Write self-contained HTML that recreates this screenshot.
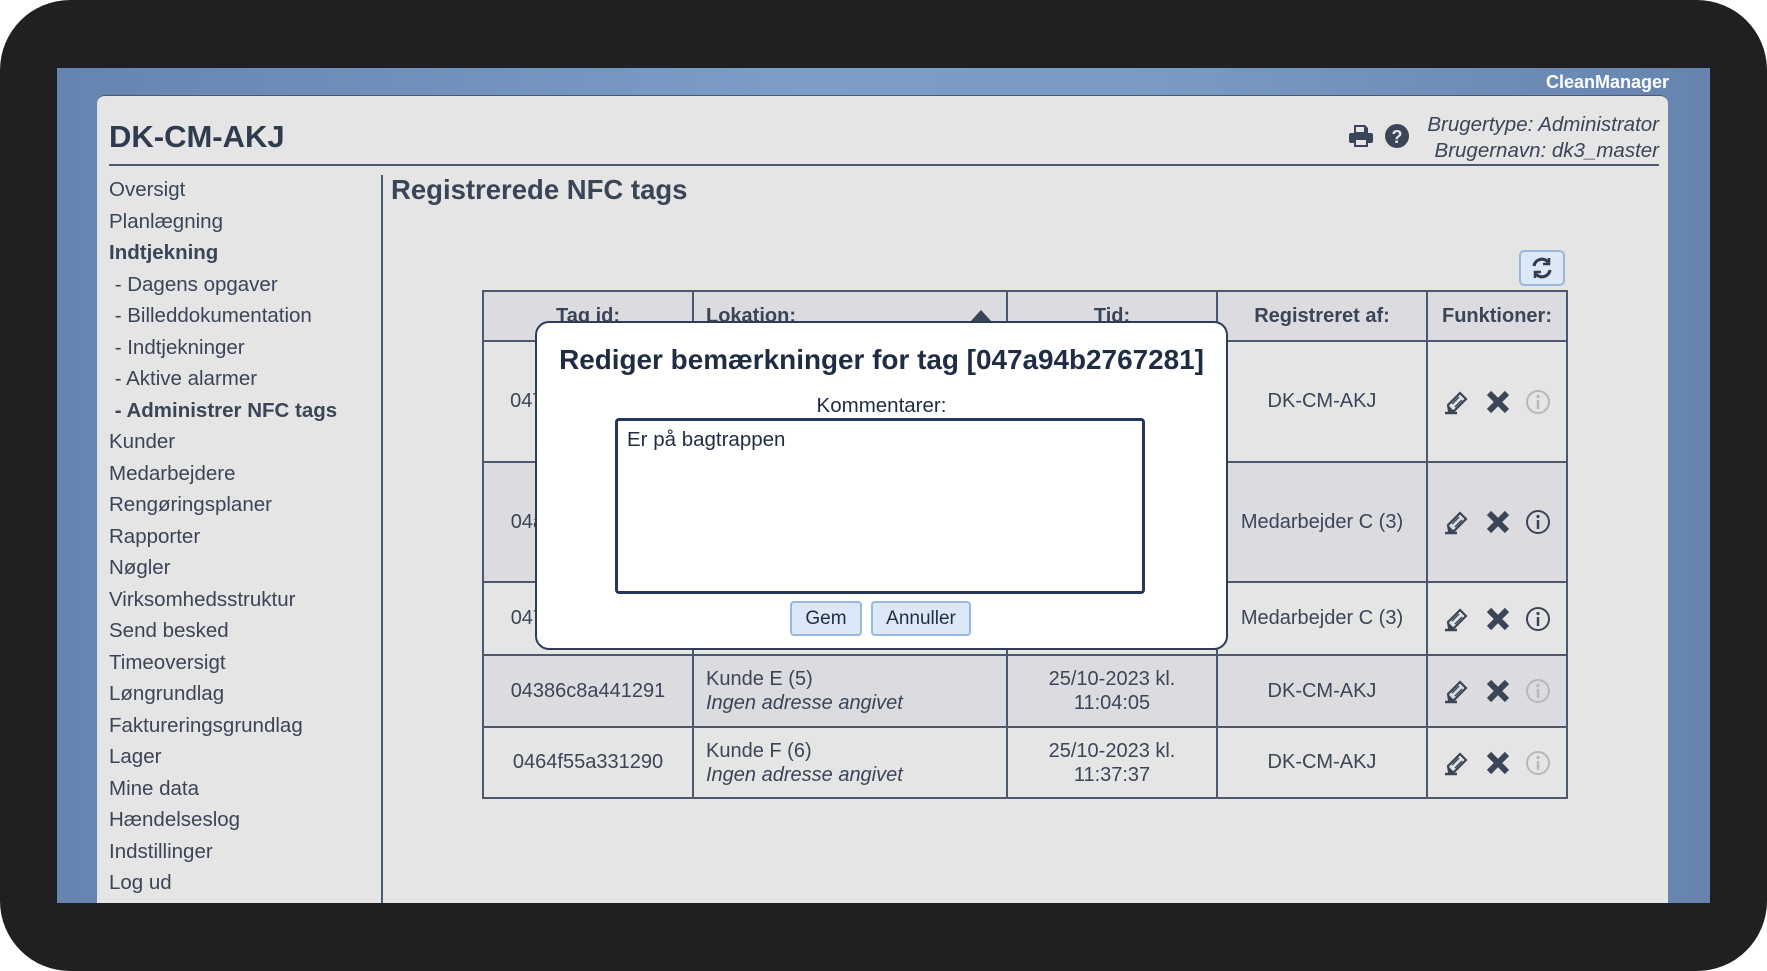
<!DOCTYPE html>
<html><head><meta charset="utf-8"><style>
*{margin:0;padding:0;box-sizing:border-box}
body{width:1767px;height:971px;background:#fff;position:relative;overflow:hidden;font-family:"Liberation Sans",sans-serif;color:#3a4558}
.frame{position:absolute;left:0;top:0;width:1767px;height:971px;background:#201f21;border-radius:70px}
.blue{position:absolute;left:57px;top:68px;width:1653px;height:835px;background:linear-gradient(90deg,#6684b0 0%,#7b9dc6 45%,#7a9bc3 65%,#6684ae 100%)}
.cm{position:absolute;right:98px;top:72px;color:#fff;font-weight:bold;font-size:18px}
.panel{position:absolute;left:97px;top:95px;width:1571px;height:808px;background:#e5e5e5;border-radius:8px 8px 0 0;border-top:1px solid #4a5870}
.a{position:absolute;white-space:nowrap}
.menu div{position:absolute;left:109px;font-size:20.5px;color:#3a4558}
table{position:absolute;left:482px;top:290px;border-collapse:collapse;font-size:20px;color:#3a4558}
td,th{border:2px solid #4a5870;text-align:center;padding:0}
th{background:#dcdce0;height:50px;font-weight:bold}
tr.d td{background:#dcdce0}
tr.l td{background:#e5e5e5}
td.loc{text-align:left;padding-left:12px;line-height:24px}
.ic{display:flex;justify-content:center;align-items:center;gap:14px}
.modal{position:absolute;left:535px;top:321px;width:693px;height:329px;background:#fff;border:2px solid #2d3d55;border-radius:14px}
.btn{position:absolute;top:601px;height:35px;background:#dce8f5;border:2px solid #9ab7dd;border-radius:4px;font-size:19px;color:#1f2d44;text-align:center;line-height:31px}
</style></head><body>
<div class="frame"></div>
<div class="blue"></div>
<div class="cm">CleanManager</div>
<div class="panel"></div>
<div class="a" style="left:109px;top:119px;font-size:31px;font-weight:bold;color:#2f3b4e">DK-CM-AKJ</div>
<div class="a" style="right:108px;top:112px;font-size:20.5px;font-style:italic;text-align:right;line-height:26px;color:#3a4558">Brugertype: Administrator<br>Brugernavn: dk3_master</div>
<svg class="a" style="left:1348px;top:124px" width="26" height="24" viewBox="0 0 26 24"><path d="M6 1h11l3 3v5H6z" fill="#3a4558"/><path d="M8 3h8v5H8z" fill="#e5e5e5"/><rect x="1" y="9" width="24" height="10" rx="2" fill="#3a4558"/><rect x="6" y="15" width="14" height="8" fill="#3a4558"/><rect x="8" y="16" width="10" height="5" fill="#e5e5e5"/></svg>
<svg class="a" style="left:1385px;top:124px" width="24" height="24" viewBox="0 0 24 24"><circle cx="12" cy="12" r="12" fill="#3a4558"/><text x="12" y="19" font-size="18" font-weight="bold" text-anchor="middle" fill="#e5e5e5" font-family="Liberation Sans">?</text></svg>
<div class="a" style="left:109px;top:164px;width:1550px;height:2px;background:#4a5870"></div>
<div class="a" style="left:381px;top:175px;width:2px;height:728px;background:#4a5870"></div>
<div class="menu">
<div style="top:178px">Oversigt</div>
<div style="top:210px">Planlægning</div>
<div style="top:241px;font-weight:bold">Indtjekning</div>
<div style="top:273px">&nbsp;- Dagens opgaver</div>
<div style="top:304px">&nbsp;- Billeddokumentation</div>
<div style="top:336px">&nbsp;- Indtjekninger</div>
<div style="top:367px">&nbsp;- Aktive alarmer</div>
<div style="top:399px;font-weight:bold">&nbsp;- Administrer NFC tags</div>
<div style="top:430px">Kunder</div>
<div style="top:462px">Medarbejdere</div>
<div style="top:493px">Rengøringsplaner</div>
<div style="top:525px">Rapporter</div>
<div style="top:556px">Nøgler</div>
<div style="top:588px">Virksomhedsstruktur</div>
<div style="top:619px">Send besked</div>
<div style="top:651px">Timeoversigt</div>
<div style="top:682px">Løngrundlag</div>
<div style="top:714px">Faktureringsgrundlag</div>
<div style="top:745px">Lager</div>
<div style="top:777px">Mine data</div>
<div style="top:808px">Hændelseslog</div>
<div style="top:840px">Indstillinger</div>
<div style="top:871px">Log ud</div>
</div>
<div class="a" style="left:391px;top:174px;font-size:27.5px;font-weight:bold;color:#3a4558">Registrerede NFC tags</div>
<div class="a" style="left:1519px;top:250px;width:46px;height:36px;background:#dce8f5;border:2px solid #9ab7dd;border-radius:5px;display:flex;align-items:center;justify-content:center">
<svg width="24" height="24" viewBox="0 0 24 24" fill="none" stroke="#2f3b4e" stroke-width="3.2"><path d="M4 10a8 8 0 0 1 14-4"/><path d="M20 14a8 8 0 0 1-14 4"/><path d="M19 2v6h-6" stroke-width="2.5"/><path d="M5 22v-6h6" stroke-width="2.5"/></svg></div>
<table>
<tr><th style="width:210px">Tag id:</th><th style="width:314px;text-align:left;padding-left:12px">Lokation:</th><th style="width:210px">Tid:</th><th style="width:210px">Registreret af:</th><th style="width:140px">Funktioner:</th></tr>
<tr class="l" style="height:121px"><td>047a94b2767281</td><td class="loc"></td><td></td><td>DK-CM-AKJ</td><td><div class="ic">P</div></td></tr>
<tr class="d" style="height:120px"><td>04a1c2b3d4e580</td><td class="loc"></td><td></td><td>Medarbejder C (3)</td><td><div class="ic">Q</div></td></tr>
<tr class="l" style="height:73px"><td>047b12c4d56789</td><td class="loc"></td><td></td><td>Medarbejder C (3)</td><td><div class="ic">Q</div></td></tr>
<tr class="d" style="height:72px"><td>04386c8a441291</td><td class="loc">Kunde E (5)<br><i>Ingen adresse angivet</i></td><td style="line-height:24px">25/10-2023 kl.<br>11:04:05</td><td>DK-CM-AKJ</td><td><div class="ic">P</div></td></tr>
<tr class="l" style="height:71px"><td>0464f55a331290</td><td class="loc">Kunde F (6)<br><i>Ingen adresse angivet</i></td><td style="line-height:24px">25/10-2023 kl.<br>11:37:37</td><td>DK-CM-AKJ</td><td><div class="ic">P</div></td></tr>
</table>
<svg class="a" style="left:970px;top:308px" width="22" height="14"><path d="M0 14L11 2L22 14z" fill="#3a4558"/></svg>
<div class="modal"></div>
<div class="a" style="left:535px;width:693px;top:344px;text-align:center;font-size:27.9px;font-weight:bold;color:#1f2d44">Rediger bemærkninger for tag [047a94b2767281]</div>
<div class="a" style="left:535px;width:693px;top:394px;text-align:center;font-size:20.5px;color:#1f2d44">Kommentarer:</div>
<div class="a" style="left:615px;top:418px;width:530px;height:176px;border:3px solid #24395a;border-radius:4px;background:#fff;font-size:20.5px;color:#1f2d44;padding:7px 9px">Er på bagtrappen</div>
<div class="btn" style="left:790px;width:72px">Gem</div>
<div class="btn" style="left:871px;width:100px">Annuller</div>
<script>
function icons(dark){var c=dark?'#3a4558':'#b8b8bc';return '<svg width="28" height="26" viewBox="0 0 28 26"><path d="M2 24h12" stroke="#3a4558" stroke-width="2.5"/><path d="M6 22l-1-6L17 4l6 6-12 12z" fill="none" stroke="#3a4558" stroke-width="2.2"/><path d="M9 15l7-7M12 18l7-7" stroke="#3a4558" stroke-width="1.5"/><path d="M5 16l6 6-6 1z" fill="#3a4558"/></svg>'+
'<svg width="26" height="26" viewBox="0 0 26 26"><path d="M4 4l18 18M22 4L4 22" stroke="#3a4558" stroke-width="6"/></svg>'+
'<svg width="26" height="26" viewBox="0 0 26 26"><circle cx="13" cy="13" r="11" fill="none" stroke="'+c+'" stroke-width="2"/><circle cx="13" cy="7.5" r="1.6" fill="'+c+'"/><path d="M13 11v9" stroke="'+c+'" stroke-width="2.5"/></svg>';}
document.querySelectorAll('.ic').forEach(function(e){var d=e.textContent=='Q';e.innerHTML=icons(d);});
</script>
</body></html>
